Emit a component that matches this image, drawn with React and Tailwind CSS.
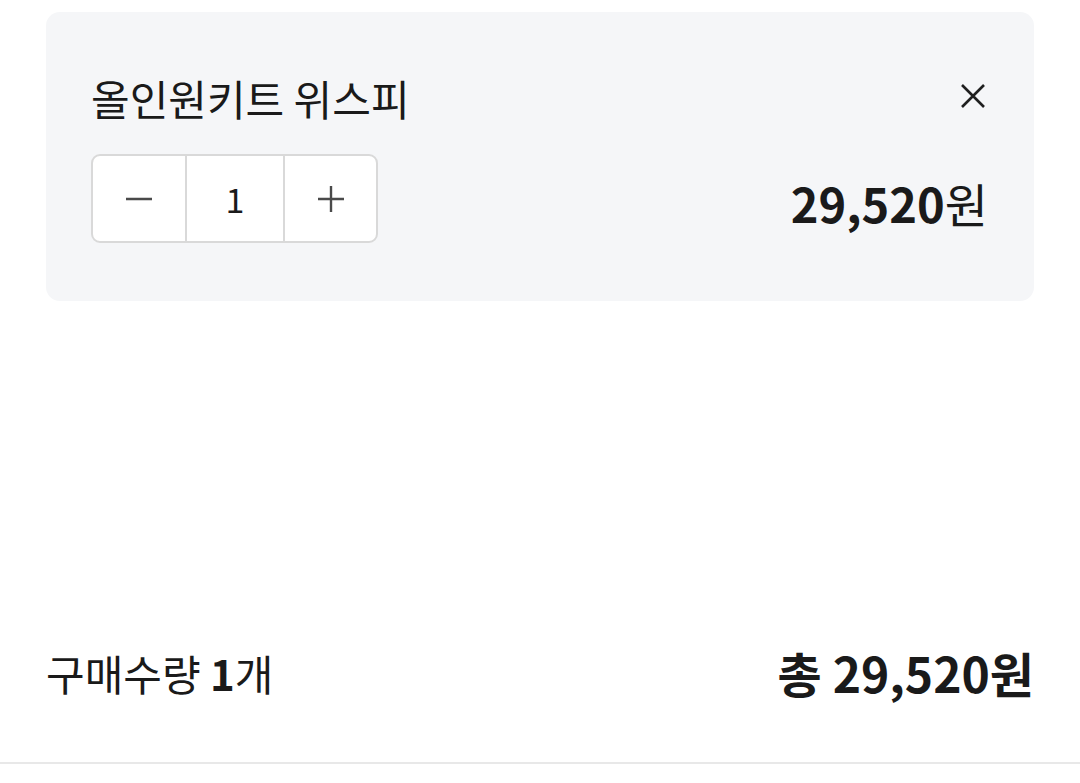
import React, { useState } from 'react';

const font = { fontFamily: '"Noto Sans CJK KR", "Noto Sans", sans-serif' };

const XIcon = () => (
  <svg width="26" height="26" viewBox="0 0 26 26" fill="none" stroke="#1f1f1f" strokeWidth="2.6" strokeLinecap="butt">
    <path d="M2 2 L24 24 M24 2 L2 24" />
  </svg>
);

const Minus = () => (
  <svg width="30" height="30" viewBox="0 0 30 30" fill="none" stroke="#4a4a4a" strokeWidth="2.4">
    <path d="M2 15 H28" />
  </svg>
);

const Plus = () => (
  <svg width="30" height="30" viewBox="0 0 30 30" fill="none" stroke="#4a4a4a" strokeWidth="2.4">
    <path d="M2 15 H28 M15 2 V28" />
  </svg>
);

export default function App() {
  const [qty, setQty] = useState(1);
  const price = 29520;
  const fmt = (n) => n.toLocaleString('ko-KR');

  return (
    <div className="w-[1080px] h-[783px] bg-white flex flex-col text-[#1a1a1a]" style={font}>
      <div className="px-[46px] pt-[12px]">
        <div className="bg-[#f5f6f8] rounded-[14px] h-[289px] pl-[45px] pr-[46px] pt-[62px] flex flex-col">
          <div className="flex items-center justify-between">
            <span className="text-[42px] leading-[48px]">올인원키트 위스피</span>
            <button className="w-[26px] h-[26px] mr-[2px] -mt-[4px]"><XIcon /></button>
          </div>
          <div className="flex items-center justify-between mt-[32px]">
            <div className="flex h-[89px] border-2 border-[#d9d9d9] rounded-[9px] bg-white overflow-hidden">
              <button onClick={() => setQty(Math.max(1, qty - 1))} className="w-[92px] flex items-center justify-center">
                <Minus />
              </button>
              <div className="w-[100px] border-x-2 border-[#d9d9d9] flex items-center justify-center text-[34px]">{qty}</div>
              <button onClick={() => setQty(qty + 1)} className="w-[91px] flex items-center justify-center">
                <Plus />
              </button>
            </div>
            <span className="text-[47px] leading-none mt-[8px]">
              <b className="font-bold">{fmt(price * qty)}</b>원
            </span>
          </div>
        </div>
      </div>

      <div className="flex-1" />

      <div className="px-[46px] flex items-center justify-between h-[80px] -mt-[4px]">
        <span className="text-[42px]">구매수량 <b className="font-bold">{qty}</b>개</span>
        <span className="text-[48px] font-bold">총 {fmt(price * qty)}원</span>
      </div>
      <div className="mt-[50px] h-[21px] border-t-2 border-[#e8e8e8]" />
    </div>
  );
}
